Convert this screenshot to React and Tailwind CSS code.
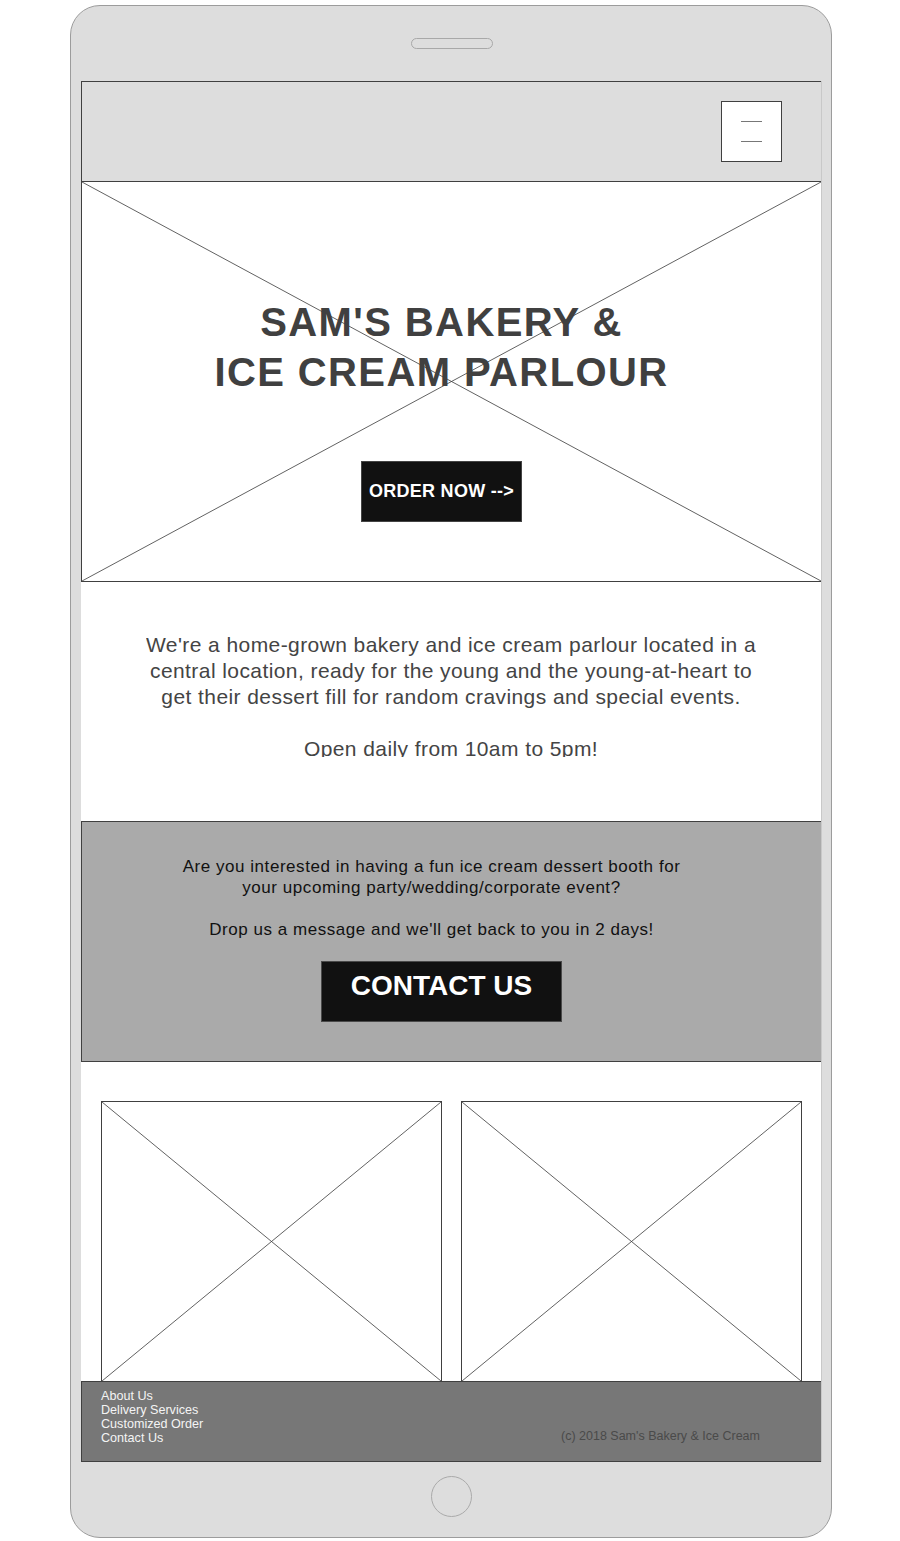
import React from "react";

const Cross = () => (
  <svg
    className="absolute inset-0 w-full h-full"
    viewBox="0 0 100 100"
    preserveAspectRatio="none"
  >
    <line x1="0" y1="0" x2="100" y2="100" stroke="#3a3a3a" strokeWidth="0.8" vectorEffect="non-scaling-stroke" />
    <line x1="100" y1="0" x2="0" y2="100" stroke="#3a3a3a" strokeWidth="0.8" vectorEffect="non-scaling-stroke" />
  </svg>
);

const FOOTER_LINKS = ["About Us", "Delivery Services", "Customized Order", "Contact Us"];

const App = () => {
  return (
    <div className="min-h-[1541px] bg-white pl-[70px] pt-[5px] font-['Liberation_Sans',Arial,sans-serif]">
      <div className="w-[762px] h-[1533px] rounded-[30px] border border-[#9c9c9c] bg-[#dddddd] pl-[10px]">
        {/* top speaker */}
        <div className="w-[741px] h-[75px] flex justify-center pt-[32px]">
          <div className="w-[82px] h-[11px] rounded-full border border-[#a8a8a8]" />
        </div>

        {/* screen */}
        <div className="w-[741px] h-[1381px] border-r border-[#c8c8c8] bg-white flex flex-col">
          {/* header */}
          <div className="h-[101px] border-y border-l border-[#404040] bg-[#dddddd] flex justify-end pt-[19px] pr-[39px]">
            <div className="w-[61px] h-[61px] border border-[#404040] bg-white flex flex-col items-center pt-[19px] gap-[19px]">
              <div className="w-[21px] h-px bg-[#777777]" />
              <div className="w-[21px] h-px bg-[#777777]" />
            </div>
          </div>

          {/* hero */}
          <div className="relative h-[400px] border-l border-b border-[#404040] bg-white">
            <Cross />
            <div className="relative flex flex-col items-center pt-[115px] pr-[20px]">
              <h1 className="text-[40px] leading-[50px] font-bold text-[#404040] text-center tracking-[0.035em]">
                SAM'S BAKERY &amp;
                <br />
                ICE CREAM PARLOUR
              </h1>
              <button className="mt-[64px] w-[161px] h-[61px] border border-[#444444] bg-[#111111] text-white text-[18px] font-bold flex items-center justify-center tracking-[0.015em]">
                ORDER NOW --&gt;
              </button>
            </div>
          </div>

          {/* about */}
          <div className="h-[239px] bg-white pt-[50px] flex justify-center">
            <p className="h-[125px] overflow-hidden text-center text-[21px] leading-[26px] text-[#444444] whitespace-nowrap tracking-[0.02em]">
              We're a home-grown bakery and ice cream parlour located in a
              <br />
              central location, ready for the young and the young-at-heart to
              <br />
              get their dessert fill for random cravings and special events.
              <br />
              <br />
              Open daily from 10am to 5pm!
            </p>
          </div>

          {/* contact */}
          <div className="h-[241px] border-y border-l border-[#404040] bg-[#aaaaaa] pt-[34px]">
            <p className="pr-[40px] text-center text-[17px] leading-[21px] text-[#111111] whitespace-nowrap tracking-[0.032em]">
              Are you interested in having a fun ice cream dessert booth for
              <br />
              your upcoming party/wedding/corporate event?
              <br />
              <br />
              Drop us a message and we'll get back to you in 2 days!
            </p>
            <div className="flex justify-center pr-[20px] mt-[21px]">
              <button className="w-[241px] h-[61px] border border-[#4a4a4a] bg-[#111111] text-white text-[28px] leading-[32px] font-bold flex justify-center pt-[8px]">
                CONTACT US
              </button>
            </div>
          </div>

          {/* gallery */}
          <div className="h-[319px] bg-white pt-[39px] pl-[20px] flex gap-[19px]">
            <div className="relative w-[341px] h-[280px] border-t border-x border-[#404040]">
              <Cross />
            </div>
            <div className="relative w-[341px] h-[280px] border-t border-x border-[#404040]">
              <Cross />
            </div>
          </div>

          {/* footer */}
          <div className="h-[81px] border-y border-l border-[#404040] bg-[#777777] flex pl-[19px] pt-[7px]">
            <div className="w-[460px] flex flex-col text-[12.6px] leading-[14px] text-[#f4f4f4]">
              {FOOTER_LINKS.map((link) => (
                <a key={link} href="#" className="w-fit">
                  {link}
                </a>
              ))}
            </div>
            <p className="pt-[40px] text-[12.5px] leading-[14px] text-[#4a4a4a]">
              (c) 2018 Sam's Bakery &amp; Ice Cream
            </p>
          </div>
        </div>

        {/* home button */}
        <div className="w-[741px] h-[75px] flex justify-center pt-[14px]">
          <div className="w-[41px] h-[41px] rounded-full border border-[#aaaaaa]" />
        </div>
      </div>
    </div>
  );
};

export default App;
